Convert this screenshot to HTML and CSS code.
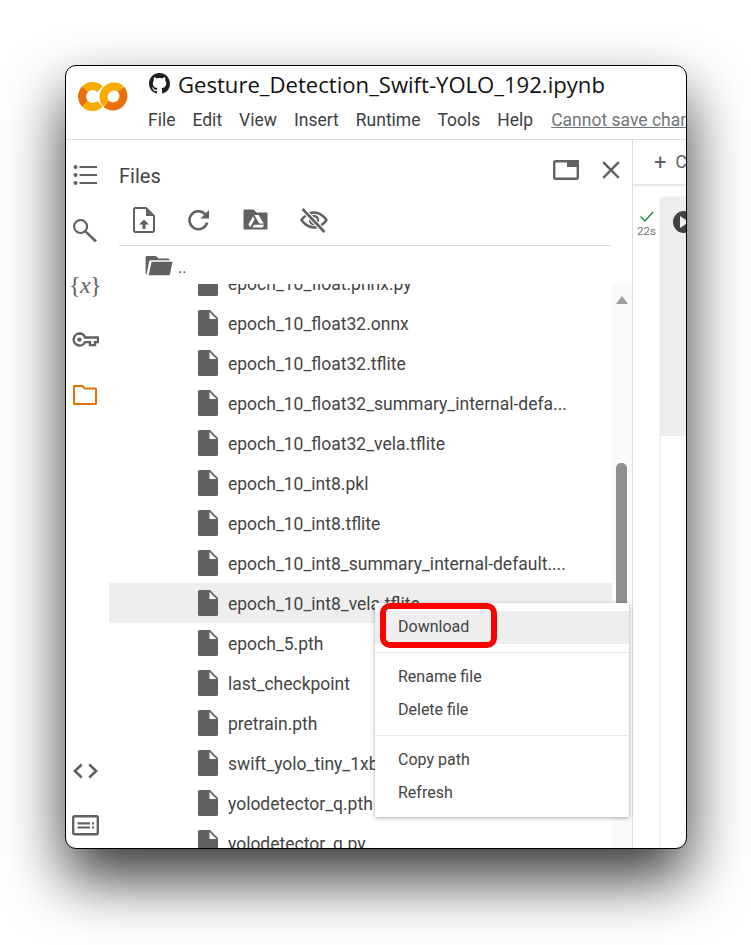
FILE: index.html
```html
<!DOCTYPE html>
<html lang="en">
<head>
<meta charset="utf-8">
<title>Gesture_Detection_Swift-YOLO_192.ipynb</title>
<link rel="stylesheet" href="styles.css">
</head>
<body>
<div class="window">
  <header class="header">
    <svg class="logo" viewBox="0 0 50 29" width="50" height="29">
      <g fill="none" stroke-width="8">
        <path stroke="#f9ab00" d="M21.9 7.1A10.5 10.5 0 0 0 7.1 7.1"/>
        <path stroke="#e8710a" d="M7.1 7.1A10.5 10.5 0 0 0 7.1 21.9"/>
        <path stroke="#f9ab00" d="M7.1 21.9A10.5 10.5 0 0 0 21.9 21.9"/>
        <path stroke="#f9ab00" d="M28.1 21.9A10.5 10.5 0 0 1 42.9 7.1"/>
        <path stroke="#e8710a" d="M42.9 7.1A10.5 10.5 0 0 1 28.1 21.9"/>
      </g>
    </svg>
    <div class="head-text">
      <div class="title-row">
        <svg class="gh" viewBox="0 0 16 16" width="21" height="21"><path fill="#1b1f23" d="M8 0C3.58 0 0 3.58 0 8c0 3.54 2.29 6.53 5.47 7.59.4.07.55-.17.55-.38 0-.19-.01-.82-.01-1.49-2.01.37-2.53-.49-2.69-.94-.09-.23-.48-.94-.82-1.13-.28-.15-.68-.52-.01-.53.63-.01 1.08.58 1.23.82.72 1.21 1.87.87 2.33.66.07-.52.28-.87.51-1.07-1.78-.2-3.64-.89-3.64-3.95 0-.87.31-1.59.82-2.15-.08-.2-.36-1.02.08-2.12 0 0 .67-.21 2.2.82.64-.18 1.32-.27 2-.27s1.36.09 2 .27c1.53-1.04 2.2-.82 2.2-.82.44 1.1.16 1.92.08 2.12.51.56.82 1.27.82 2.15 0 3.07-1.87 3.75-3.65 3.95.29.25.54.73.54 1.48 0 1.07-.01 1.93-.01 2.2 0 .21.15.46.55.38A8.01 8.01 0 0 0 16 8c0-4.42-3.58-8-8-8z"/></svg>
        <span class="title">Gesture_Detection_Swift-YOLO_192.ipynb</span>
      </div>
      <nav class="menu">
        <span>File</span><span>Edit</span><span>View</span><span>Insert</span><span>Runtime</span><span>Tools</span><span>Help</span>
        <span class="save">Cannot save changes</span>
      </nav>
    </div>
  </header>
  <div class="body">
    <aside class="rail">
      <div class="rail-top">
        <svg class="ri" viewBox="0 0 24 24"><path fill="#616161" d="M2.5 2a2 2 0 1 1 0 4 2 2 0 0 1 0-4zm0 8a2 2 0 1 1 0 4 2 2 0 0 1 0-4zm0 8a2 2 0 1 1 0 4 2 2 0 0 1 0-4zM6.5 2.9H24v2.2H6.5zm0 8H24v2.2H6.5zm0 8H24v2.2H6.5z"/></svg>
        <svg class="ri" viewBox="0 0 24 24"><circle cx="7.6" cy="8.5" r="6.5" fill="none" stroke="#616161" stroke-width="2.2"/><path d="M12.4 13.4L23 23.5" stroke="#616161" stroke-width="2.6" fill="none"/></svg>
        <div class="vars">{<i>x</i>}</div>
        <svg class="ri ri-wide" viewBox="0 0 27 24"><path fill="none" stroke="#616161" stroke-width="2.4" d="M7.5 5.5a6 6 0 0 1 5.6 4H26v4.6h-3v3h-5v-3h-4.9a6 6 0 1 1-5.6-8.6z"/><circle cx="7.4" cy="11.6" r="2.2" fill="#616161"/></svg>
        <svg class="ri" viewBox="0 0 24 24"><path fill="none" stroke="#e8710a" stroke-width="2" stroke-linejoin="round" d="M1 3h8.4l2.4 2.6H23V21H1z"/></svg>
      </div>
      <div class="rail-bottom">
        <svg class="ri ri-wide" viewBox="0 0 26 24"><path fill="none" stroke="#616161" stroke-width="2.6" d="M9.2 5.5L2.4 12l6.8 6.5M16.8 5.5l6.8 6.5-6.8 6.5"/></svg>
        <svg class="ri ri-wide" viewBox="0 0 27 24"><rect x="1.2" y="3.2" width="24.6" height="18" rx="1.4" fill="none" stroke="#616161" stroke-width="2.4"/><path fill="#616161" d="M5.5 9.2h12.5v2.2H5.5zM5.5 13.4h12.5v2.2H5.5zM20 9.2h2v2.2h-2zM20 13.4h2v2.2h-2z"/></svg>
      </div>
    </aside>
    <section class="files">
      <div class="files-head">
        <span class="files-title">Files</span>
        <div class="files-actions">
          <svg viewBox="0 0 26 20" width="26" height="20"><rect x="1.2" y="1.2" width="23.6" height="17.6" rx="1.5" fill="none" stroke="#616161" stroke-width="2.4"/><path fill="#616161" d="M14 0h12v7H14z"/></svg>
          <svg viewBox="0 0 18 18" width="18" height="18"><path d="M1.2 1.2l15.6 15.6M16.8 1.2L1.2 16.8" stroke="#616161" stroke-width="2.4" fill="none"/></svg>
        </div>
      </div>
      <div class="files-tools">
        <svg width="22" height="26" viewBox="0 0 22 26"><path fill="none" stroke="#616161" stroke-width="2" stroke-linejoin="round" d="M2.5 1H13l8 8v14.5a1.5 1.5 0 0 1-1.5 1.5h-17A1.5 1.5 0 0 1 1 23.5V2.5A1.5 1.5 0 0 1 2.5 1z"/><path fill="#616161" d="M13 1v8h8zM11 12.5l5 5h-3.4V22H9.4v-4.500H6z"/></svg>
        <svg width="22" height="26" viewBox="0 0 22 26"><path fill="none" stroke="#616161" stroke-width="2.6" d="M19.2 15.5A9 9 0 1 1 17.2 7.2"/><path fill="#616161" d="M21 3v8.5h-8.5z"/></svg>
        <svg width="26" height="26" viewBox="0 1 26 26"><path fill="#616161" fill-rule="evenodd" d="M1.5 3.5h9l3 3h10a1 1 0 0 1 1 1v15a1 1 0 0 1-1 1h-22a1 1 0 0 1-1-1v-18a1 1 0 0 1 1-1zM14.5 9h-3.2l5 8.6h4.5L15.7 9zM10 10.4l-4.6 8 1.7 2.9 4.6-8zM9.3 21.6h10.2l1.7-2.8H11z"/></svg>
        <svg class="eye" width="28" height="26" viewBox="0 0 28 26"><path fill="none" stroke="#616161" stroke-width="2.4" d="M1.5 13s4.8-7.500 12.500-7.500S26.500 13 26.500 13s-4.800 7.500-12.500 7.500S1.500 13 1.500 13z"/><circle cx="14" cy="13" r="4" fill="none" stroke="#616161" stroke-width="2.4"/><path d="M2.5 2l22 23" stroke="#fff" stroke-width="5"/><path d="M2.5 2l22 23" stroke="#616161" stroke-width="2.6"/></svg>
      </div>
      <div class="tools-rule"></div>
      <div class="parent-row">
        <svg width="28" height="24" viewBox="0 0 28 24"><path fill="#616161" d="M2 3h9l2.6 2.6h9.6a1.6 1.6 0 0 1 1.6 1.6H6a2 2 0 0 0-2 1.700L1.600 21.800A2 2 0 0 1 .6 20V4.400A1.400 1.400 0 0 1 2 3zM6.600 8.700H27.600L25 21a1.500 1.500 0 0 1-1.500 1.200H3.600z"/></svg>
        <span class="dots">..</span>
      </div>
      <div class="scroll">
        <ul class="list">
          <li><svg class="doc"><use href="#doc"/></svg><span>epoch_10_float.pnnx.py</span></li>
          <li><svg class="doc"><use href="#doc"/></svg><span>epoch_10_float32.onnx</span></li>
          <li><svg class="doc"><use href="#doc"/></svg><span>epoch_10_float32.tflite</span></li>
          <li><svg class="doc"><use href="#doc"/></svg><span>epoch_10_float32_summary_internal-defa...</span></li>
          <li><svg class="doc"><use href="#doc"/></svg><span>epoch_10_float32_vela.tflite</span></li>
          <li><svg class="doc"><use href="#doc"/></svg><span>epoch_10_int8.pkl</span></li>
          <li><svg class="doc"><use href="#doc"/></svg><span>epoch_10_int8.tflite</span></li>
          <li><svg class="doc"><use href="#doc"/></svg><span>epoch_10_int8_summary_internal-default....</span></li>
          <li class="active"><svg class="doc"><use href="#doc"/></svg><span>epoch_10_int8_vela.tflite</span></li>
          <li><svg class="doc"><use href="#doc"/></svg><span>epoch_5.pth</span></li>
          <li><svg class="doc"><use href="#doc"/></svg><span>last_checkpoint</span></li>
          <li><svg class="doc"><use href="#doc"/></svg><span>pretrain.pth</span></li>
          <li><svg class="doc"><use href="#doc"/></svg><span>swift_yolo_tiny_1xb16_300e_coco.py</span></li>
          <li><svg class="doc"><use href="#doc"/></svg><span>yolodetector_q.pth</span></li>
          <li><svg class="doc"><use href="#doc"/></svg><span>yolodetector_q.py</span></li>
        </ul>
        <div class="track">
          <div class="arrow"></div>
          <div class="thumb"></div>
        </div>
      </div>
    </section>
    <main class="notebook">
      <div class="nb-bar"><span class="plus">+</span><span class="code">Code</span></div>
      <div class="nb-body">
        <div class="status">
          <svg width="16" height="13" viewBox="0 0 16 13"><path d="M1.5 6.500l4.500 4.500 8-9" fill="none" stroke="#1e8e3e" stroke-width="1.4"/></svg>
          <span>22s</span>
        </div>
        <div class="cell">
          <div class="cell-top"><div class="play"></div></div>
        </div>
      </div>
    </main>
  </div>
  <div class="ctx">
    <div class="ctx-item hl">Download</div>
    <div class="ctx-sep"></div>
    <div class="ctx-item">Rename file</div>
    <div class="ctx-item">Delete file</div>
    <div class="ctx-sep"></div>
    <div class="ctx-item">Copy path</div>
    <div class="ctx-item">Refresh</div>
  </div>
  <div class="redbox"></div>
</div>
<svg class="defs" width="0" height="0"><symbol id="doc" viewBox="0 0 20 26"><path fill="#616161" d="M1.6 0H12l8 8v16.4a1.6 1.6 0 0 1-1.6 1.6H1.6A1.6 1.6 0 0 1 0 24.4V1.6A1.6 1.6 0 0 1 1.6 0z"/><path fill="#fff" d="M11.5 2v7h7z"/></symbol></svg>
</body>
</html>
```
FILE: styles.css
```css
* { box-sizing: border-box; }
html, body { margin: 0; height: 100%; background: #fff; overflow: hidden; }
body { font-family: Roboto, "Liberation Sans", sans-serif; color: #444; }
.defs { position: absolute; }
.window {
  position: relative;
  margin: 65px 0 0 65px;
  width: 622px;
  height: 784px;
  background: #fff;
  border: 1px solid #000;
  border-radius: 11px;
  overflow: hidden;
  box-shadow: 0 30px 60px rgba(0,0,0,.78);
}
.header {
  height: 74px;
  border-bottom: 1px solid #dadce0;
  display: flex;
  padding: 0 0 0 12px;
}
.logo { margin: 16px 0 0 0; flex: none; }
.head-text { margin-left: 20px; min-width: 0; flex: 1; overflow: hidden; }
.title-row { display: flex; align-items: center; height: 24px; margin-top: 7px; white-space: nowrap; }
.gh { margin: 0 8px 3px 1px; flex: none; }
.title { font-family: "Open Sans", sans-serif; font-size: 22.1px; color: #111; margin-bottom: 2px; }
.menu { display: flex; gap: 17px; margin-top: 11px; font-size: 17.5px; line-height: 24px; color: #3c4043; white-space: nowrap; }
.save { color: #70757a; text-decoration: underline; margin-left: 1px; }
.body { display: flex; height: 708px; }
.rail { width: 43px; flex: none; display: flex; flex-direction: column; justify-content: space-between; align-items: center; padding: 23px 5px 11px 0; }
.rail-top { display: flex; flex-direction: column; align-items: center; gap: 31px; }
.rail-bottom { display: flex; flex-direction: column; align-items: center; gap: 30px; }
.ri { width: 24px; height: 24px; display: block; }
.ri-wide { width: 27px; }
.vars { font-family: "Liberation Serif", serif; font-size: 24px; line-height: 24px; letter-spacing: -.6px; color: #616161; }
.files { width: 524px; flex: none; border-right: 1px solid #dadce0; display: flex; flex-direction: column; position: relative; }
.files-head { display: flex; justify-content: space-between; align-items: flex-start; height: 67px; padding: 24px 12px 0 10px; }
.files-title { font-size: 20px; line-height: 24px; color: #444; }
.files-actions { display: flex; gap: 23px; align-items: center; margin-top: -4px; }
.files-tools { display: flex; gap: 33px; padding-left: 24px; height: 38px; align-items: flex-start; }
.eye { margin-left: -2px; }
.tools-rule { height: 1px; background: #dadce0; margin: 0 21px 0 10px; }
.parent-row { display: flex; align-items: center; height: 38px; padding-left: 36px; gap: 5px; }
.dots { font-size: 16px; margin-top: 4px; }
.scroll { position: relative; flex: 1; overflow: hidden; }
.list { list-style: none; margin: -21px 20px 0 0; padding: 0; }
.list li { height: 40px; display: flex; align-items: center; padding-left: 89px; font-size: 17.5px; white-space: nowrap; overflow: hidden; color: #444; }
.list li span { margin-top: 2px; }
.list li.active { background: #eee; }
.doc { width: 20px; height: 26px; margin-right: 10px; flex: none; }
.track { position: absolute; right: 0; top: 0; bottom: 0; width: 20px; background: #fafafa; }
.arrow { margin: 12px auto 0; width: 0; height: 0; border: 6px solid transparent; border-top: 0; border-bottom: 8px solid #9e9e9e; }
.thumb { position: absolute; left: 4px; top: 179px; width: 11px; height: 142px; background: #8f8f8f; border-radius: 5px 5px 0 0; }
.notebook { flex: 1; min-width: 0; overflow: hidden; display: flex; flex-direction: column; }
.nb-bar { height: 44px; display: flex; align-items: center; padding-left: 21px; gap: 9px; white-space: nowrap; box-shadow: 0 1px 3px rgba(0,0,0,.18); position: relative; }
.plus { font-size: 22px; color: #5f6368; }
.code { font-size: 17.5px; color: #5f6368; }
.nb-body { flex: 1; display: flex; padding-top: 14px; }
.status { width: 27px; flex: none; display: flex; flex-direction: column; align-items: center; font-size: 11.5px; line-height: 14px; color: #70757a; padding: 12px 0 0 0; }
.status svg { margin-bottom: 1px; }
.cell { width: 40px; flex: none; margin-left: 1px; box-shadow: 0 0 3px rgba(0,0,0,.2); }
.cell-top { height: 238px; background: #eee; padding: 13px 0 0 12px; overflow: hidden; }
.play { position: relative; width: 22px; height: 22px; background: #424242; border-radius: 50%; }
.play::after { content: ""; position: absolute; left: 7px; top: 5px; border-left: 9px solid #eee; border-top: 6px solid transparent; border-bottom: 6px solid transparent; }
.ctx {
  position: absolute;
  left: 309px; top: 537px;
  width: 254px; height: 214px;
  background: #fff;
  padding: 8px 0;
  box-shadow: 0 1px 4px rgba(0,0,0,.35);
  font-size: 16px;
  color: #444;
}
.ctx-item { height: 33px; line-height: 31px; padding-left: 23px; }
.ctx-item.hl { background: #eee; }
.ctx-sep { height: 1px; background: #e8eaed; margin: 8px 0 8px; }
.redbox {
  position: absolute;
  left: 314px; top: 537px;
  width: 117px; height: 45px;
  border: 6px solid #f00;
  border-radius: 10px;
}
```
